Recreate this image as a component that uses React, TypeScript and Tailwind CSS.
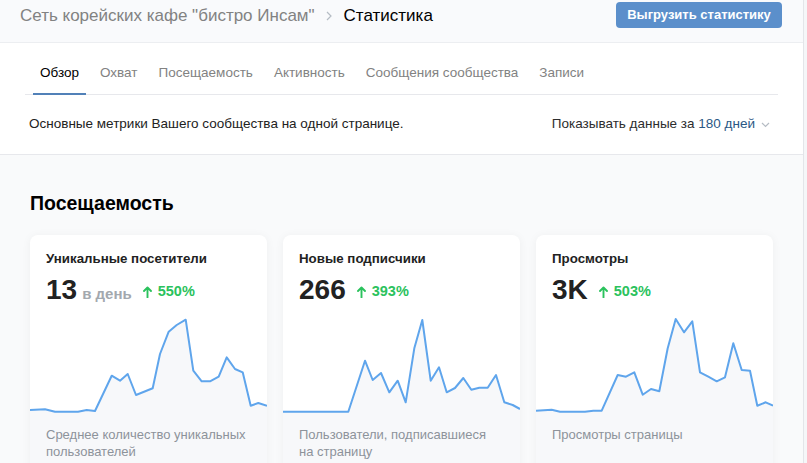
import React from 'react';

type Metric = {
  title: string;
  value: string;
  unit?: string;
  growth: string;
  desc: string;
  points: [number, number][];
};

const metrics: Metric[] = [
  {
    title: 'Уникальные посетители',
    value: '13',
    unit: 'в день',
    growth: '550%',
    desc: 'Среднее количество уникальных пользователей',
    points: [
      [0, 96], [15, 95.3], [25, 97.7], [48, 97.7], [56.7, 96], [65, 97], [81.7, 61.7], [90, 66.7],
      [97.7, 60], [106, 81], [122.7, 74.3], [130, 40], [138.7, 17.7], [146.7, 11], [155.7, 5.7],
      [163.3, 56.7], [171.7, 67.3], [180, 67.3], [188.7, 62.7], [196.7, 43.3], [205, 55],
      [212.7, 58.3], [220.7, 91.7], [228.3, 89], [237, 91.7],
    ],
  },
  {
    title: 'Новые подписчики',
    value: '266',
    growth: '393%',
    desc: 'Пользователи, подписавшиеся на страницу',
    points: [
      [0, 97.7], [65.3, 97.7], [82, 46.7], [89.7, 66], [98, 59], [106.3, 78.3], [114.7, 66.7],
      [122.7, 88.3], [131.3, 34.3], [139.3, 6], [147.7, 66.7], [156, 53.3], [163.7, 78.3],
      [172, 74], [180.3, 64], [188.3, 75.7], [196.3, 73.7], [204.7, 73.7], [213, 61],
      [221.3, 88.3], [229.7, 91], [237, 95],
    ],
  },
  {
    title: 'Просмотры',
    value: '3K',
    growth: '503%',
    desc: 'Просмотры страницы',
    points: [
      [0, 96.7], [15.7, 95.7], [24, 97.7], [49, 97.7], [57.3, 96.7], [65.7, 96.7], [81.7, 61],
      [90, 62.7], [98.3, 58.3], [106.7, 80.7], [115, 75], [123.3, 77.3], [131.7, 34.3],
      [139.7, 5], [148, 18.3], [156.3, 7.3], [164, 58.3], [172.3, 62.7], [180.7, 67.3],
      [189, 63.3], [197.3, 29.3], [205.7, 56], [214, 56.7], [221.3, 91.7], [229.7, 88.3],
      [237, 91.7],
    ],
  },
];

const tabs = ['Обзор', 'Охват', 'Посещаемость', 'Активность', 'Сообщения сообщества', 'Записи'];

const ArrowUp = () => (
  <svg width="9" height="12" viewBox="0 0 9 12" className="shrink-0">
    <path d="M4.5 11.5V1.5M1 5L4.5 1.5L8 5" fill="none" stroke="#2bc25d" strokeWidth="1.9" strokeLinecap="round" strokeLinejoin="round" />
  </svg>
);

const Chart = ({ points }: { points: [number, number][] }) => {
  const line = points.map(([x, y]) => `${x},${y}`).join(' ');
  const area = `0,100 ${line} 237,100`;
  return (
    <svg width="237" height="100" viewBox="0 0 237 100" className="block">
      <polygon points={area} fill="#f7f8fa" />
      <polyline points={line} fill="none" stroke="#5fa5ec" strokeWidth="2" strokeLinejoin="round" />
    </svg>
  );
};

const MetricCard = ({ m }: { m: Metric }) => (
  <div className="bg-white rounded-[8px] overflow-hidden shadow-[0_1px_10px_rgba(0,0,0,0.05)] flex flex-col">
    <div className="px-[16px] pt-[16px]">
      <div className="text-[13.3px] leading-[16px] font-bold text-[#222]">{m.title}</div>
      <div className="flex items-baseline mt-[7px] h-[32px]">
        <span className="text-[28px] leading-[32px] font-bold text-[#222]">{m.value}</span>
        {m.unit && <span className="ml-[5px] text-[15px] font-bold text-[#a3a8ae]">{m.unit}</span>}
        <span className="ml-[11px] flex items-center gap-[6px] text-[14.5px] font-bold text-[#2bc25d] self-center mt-[4px]">
          <ArrowUp />
          {m.growth}
        </span>
      </div>
    </div>
    <div className="mt-[8px]">
      <Chart points={m.points} />
    </div>
    <div className="flex-1 bg-[#f7f8fa] px-[16px] pt-[12px] pb-[16px] text-[13px] leading-[17px] text-[#8d939a]">
      {m.desc}
    </div>
  </div>
);

export default function App() {
  return (
    <div className="h-[463px] overflow-hidden flex bg-[#f5f6f8] font-['Liberation_Sans',Arial,sans-serif]">
      <div className="w-[804px] shrink-0 border-r border-[#e3e5e9] flex flex-col bg-[#f9fafb]">
        {/* Header */}
        <header className="h-[43px] shrink-0 border-b border-[#eceef1] bg-[#f9fafc] flex items-start justify-between pl-[20px] pr-[21px] pt-[2px]">
          <div className="flex items-center h-[27px] text-[17px]">
            <span className="text-[#828282]">Сеть корейских кафе "бистро Инсам"</span>
            <svg width="6" height="10" viewBox="0 0 6 10" className="ml-[11px] mr-[12px]">
              <path d="M1 1L5 5L1 9" fill="none" stroke="#b5bcc4" strokeWidth="1.2" />
            </svg>
            <span className="text-[#000]">Статистика</span>
          </div>
          <button className="h-[26px] w-[166px] rounded-[4px] bg-[#5b8fcb] text-white text-[13px] font-bold">
            Выгрузить статистику
          </button>
        </header>

        {/* Tabs */}
        <section className="bg-white border-b border-[#e7e8ec] px-[25px] shrink-0">
          <nav className="flex gap-[7px] border-b border-[#e7e8ec] h-[52px] pl-[8px]">
            {tabs.map((t, i) => (
              <div
                key={t}
                className={
                  i === 0
                    ? 'h-[52px] -mb-px pt-[10px] px-[7px] flex items-center border-b-2 border-[#5181b8] text-[13.5px] text-black'
                    : 'h-[52px] -mb-px pt-[10px] px-[7px] flex items-center border-b-2 border-transparent text-[13.5px] text-[#828282]'
                }
              >
                {t}
              </div>
            ))}
          </nav>
          <div className="h-[59px] flex items-center justify-between pl-[4px] pr-[8px] text-[13.5px]">
            <span className="text-[#222]">Основные метрики Вашего сообщества на одной странице.</span>
            <span className="flex items-center text-[#2c2d2e]">
              Показывать данные за&nbsp;<span className="text-[#2a5885]">180 дней</span>
              <svg width="9" height="6" viewBox="0 0 9 6" className="ml-[6px] mt-[1px]">
                <path d="M1 1L4.5 4.5L8 1" fill="none" stroke="#b5bcc4" strokeWidth="1.2" />
              </svg>
            </span>
          </div>
        </section>

        {/* Body */}
        <main className="px-[30px] pt-[36px]">
          <h2 className="text-[19.5px] leading-[24px] font-bold text-[#000] mb-[20px]">Посещаемость</h2>
          <div className="grid grid-cols-3 gap-[16px]">
            {metrics.map(m => (
              <MetricCard key={m.title} m={m} />
            ))}
          </div>
        </main>
      </div>
    </div>
  );
}
